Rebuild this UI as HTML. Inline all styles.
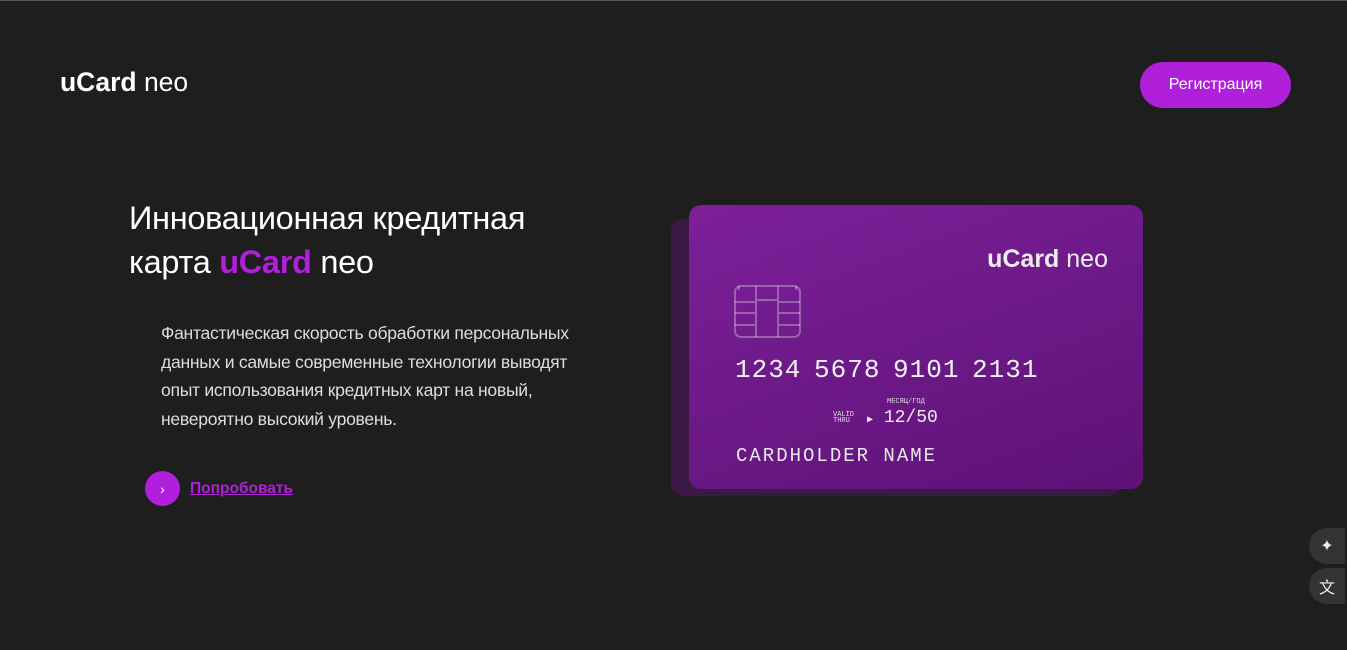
<!DOCTYPE html>
<html><head><meta charset="utf-8"><style>
*{margin:0;padding:0;box-sizing:border-box}
body{width:1347px;height:650px;overflow:hidden;background:#1e1e1e;font-family:"Liberation Sans",sans-serif;color:#fff;position:relative;border-top:1px solid #555}
.logo{position:absolute;left:60px;top:66px;font-size:26.5px}
.logo b{font-weight:700}
.reg{position:absolute;left:1140px;top:61px;width:151px;height:46px;border-radius:23px;background:#b01fd9;font-size:16px;display:flex;align-items:center;justify-content:center}
h1{position:absolute;left:129px;top:195px;font-weight:400;font-size:32.5px;line-height:44px;letter-spacing:-0.3px}
h1 b{color:#b01fd9}
.p{position:absolute;left:161px;top:318px;width:440px;font-size:17.6px;line-height:28.5px;color:#ddd;letter-spacing:-0.3px}
.btn{position:absolute;left:145px;top:470px;width:35px;height:35px;border-radius:50%;background:#b01fd9;display:flex;align-items:center;justify-content:center;font-size:14px}
.try{position:absolute;left:190px;top:479px;font-size:15.5px;color:#b01fd9;text-decoration:underline;font-weight:700}
.shadow{position:absolute;left:671px;top:218px;width:450px;height:277px;border-radius:12px;background:#3a1a45}
.card{position:absolute;left:689px;top:204px;width:454px;height:284px;border-radius:12px;background:linear-gradient(160deg,#7c2099,#5d1277)}
.cl{position:absolute;right:35px;top:40px;font-size:25px;color:#eee}
.chip{position:absolute;left:45px;top:80px;width:67px;height:53px}
.num{position:absolute;left:46px;top:150px;font-family:"Liberation Mono",monospace;font-size:26px;letter-spacing:1px;color:#f2f2f2;word-spacing:-4px}
.mm{position:absolute;left:198px;top:193px;font-family:"Liberation Mono",monospace;font-size:7px;color:#ddd}
.vt{position:absolute;left:144px;top:207px;font-family:"Liberation Mono",monospace;font-size:7px;line-height:6px;color:#ddd}
.exp{position:absolute;left:178px;top:203px;font-family:"Liberation Mono",monospace;font-size:18px;color:#eee}
.name{position:absolute;left:47px;top:240px;font-family:"Liberation Mono",monospace;font-size:19px;letter-spacing:2px;color:#e8e8e8}
.ic{position:absolute;left:1309px;width:36px;height:36px;border-radius:18px 0 0 18px;background:#333;display:flex;align-items:center;justify-content:center;color:#eee;font-size:16px}
</style></head><body>
<div class="logo"><b>uCard</b> neo</div>
<div class="reg">Регистрация</div>
<h1>Инновационная кредитная<br>карта <b>uCard</b> neo</h1>
<div class="p">Фантастическая скорость обработки персональных данных и самые современные технологии выводят опыт использования кредитных карт на новый, невероятно высокий уровень.</div>
<div class="btn">›</div>
<div class="try">Попробовать</div>
<div class="shadow"></div>
<div class="card">
<div class="cl"><b>uCard</b> neo</div>
<svg class="chip" viewBox="0 0 67 53" fill="none" stroke="rgba(255,255,255,.3)" stroke-width="2"><rect x="1" y="1" width="65" height="51" rx="6"/><path d="M22 1v51M44 1v51M22 15h22v32M1 17h21M1 28h21M1 40h21M44 17h22M44 28h22M44 40h22M5 1v4M62 1v4"/></svg>
<div class="num">1234 5678 9101 2131</div>
<div class="mm">МЕСЯЦ/ГОД</div>
<div class="vt">VALID<br>THRU</div>
<div class="exp"><span style="font-size:10px">▶</span> 12/50</div>
<div class="name">CARDHOLDER NAME</div>
</div>
<div class="ic" style="top:527px">✦</div>
<div class="ic" style="top:567px">文</div>
</body></html>
